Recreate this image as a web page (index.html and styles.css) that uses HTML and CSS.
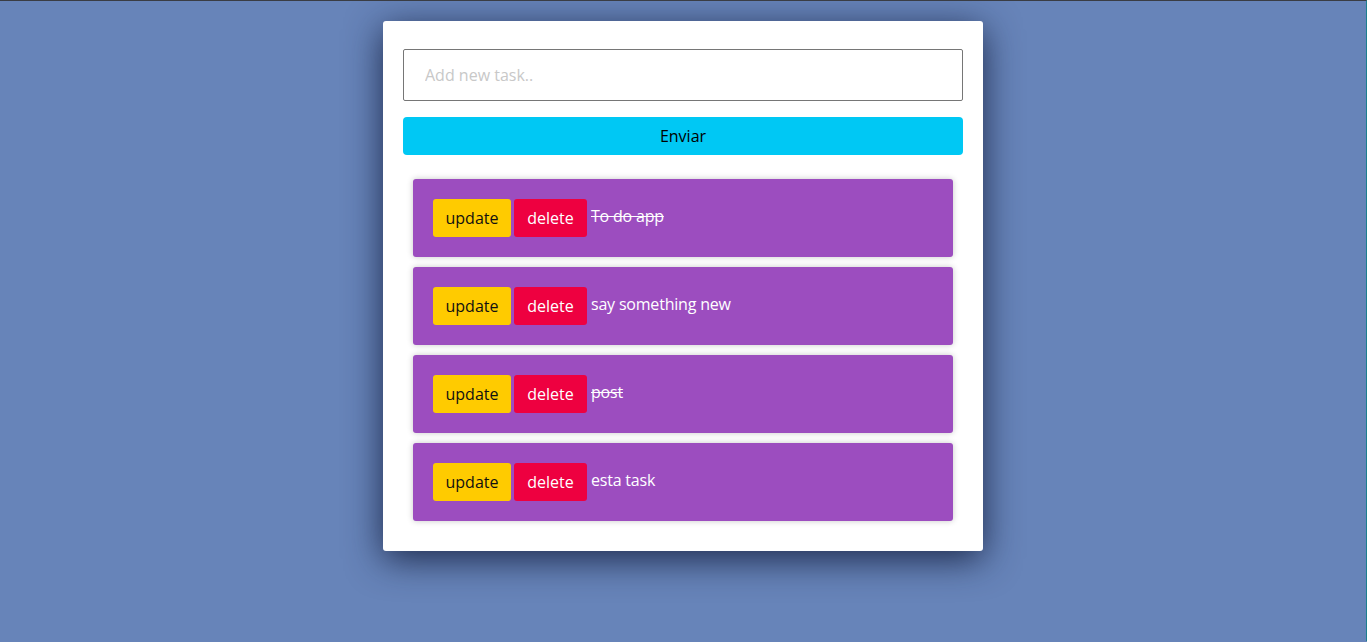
FILE: index.html
```html
<!DOCTYPE html>
<html>
<head>
<meta charset="utf-8">
<link rel="stylesheet" href="styles.css">
</head>
<body>
<div class="card">
  <input class="task-input" type="text" placeholder="Add new task..">
  <button class="send">Enviar</button>
  <ul class="list">
    <li class="item"><button class="btn upd">update</button><button class="btn del">delete</button><span class="label done">To do app</span></li>
    <li class="item"><button class="btn upd">update</button><button class="btn del">delete</button><span class="label">say something new</span></li>
    <li class="item"><button class="btn upd">update</button><button class="btn del">delete</button><span class="label done">post</span></li>
    <li class="item"><button class="btn upd">update</button><button class="btn del">delete</button><span class="label">esta task</span></li>
  </ul>
</div>
</body>
</html>
```
FILE: styles.css
```css
html { background: #6784b9; }
body {
  margin: 0;
  border-top: 1px solid #3a3d44;
  border-right: 1px solid #1b7f8f;
  min-height: 641px;
  box-sizing: border-box;
  background: #6784b9;
  font-family: "Open Sans", "Noto Sans", sans-serif;
  font-size: 16px;
  padding-top: 20px;
}
.card {
  width: 600px;
  margin: 0 auto;
  background: #fff;
  border-radius: 3px;
  box-sizing: border-box;
  padding: 28px 20px 30px;
  box-shadow: 0 8px 36px rgba(15, 25, 55, 0.85);
  display: flex;
  flex-direction: column;
}
.task-input {
  height: 52px;
  box-sizing: border-box;
  border: 1px solid #767676;
  border-radius: 2px;
  padding: 0 21px;
  font-family: inherit;
  font-size: 16px;
  color: #333;
  outline: none;
}
.task-input::placeholder { color: #c8c8c8; }
.send {
  margin-top: 16px;
  height: 38px;
  border: none;
  border-radius: 4px;
  background: #00c8f4;
  color: #000;
  font-family: inherit;
  font-size: 16px;
}
.list {
  list-style: none;
  margin: 24px 10px 0;
  padding: 0;
  display: flex;
  flex-direction: column;
  gap: 10px;
}
.item {
  background: #9c4dbf;
  border-radius: 3px;
  box-shadow: 0 0 6px rgba(0, 0, 0, 0.22);
  padding: 20px;
  display: flex;
  align-items: center;
}
.btn {
  height: 38px;
  border: none;
  border-radius: 3px;
  font-family: inherit;
  font-size: 16px;
  padding: 0;
  margin-right: 3px;
}
.upd { width: 78px; background: #ffcb00; color: #111; }
.del { width: 73px; background: #ee0040; color: #fff; margin-right: 4px; }
.label {
  color: #fff;
  position: relative;
  top: -2px;
  letter-spacing: -0.2px;
}
.done { text-decoration: line-through; }
```
